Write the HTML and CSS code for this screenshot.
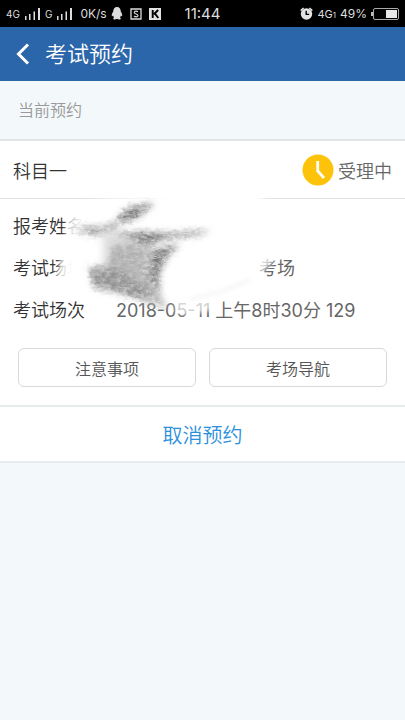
FILE: index.html
```html
<!DOCTYPE html>
<html lang="zh-CN">
<head>
<meta charset="utf-8">
<meta name="viewport" content="width=device-width, initial-scale=1">
<title>考试预约</title>
<link rel="stylesheet" href="styles.css">
</head>
<body>
<div class="status">
  <div class="status-left">
    <span class="net">4G</span>
    <svg width="17" height="12" viewBox="0 0 17 12" fill="#ddd"><path d="M1 8h1.500v4H1zM5 6h1.500v6H5zM9.500 3.500H11V12H9.500zM14 0h2v12h-2z"/></svg>
    <span class="net">G</span>
    <svg width="17" height="12" viewBox="0 0 17 12" fill="#ddd"><path d="M1 8h1.500v4H1zM5 6h1.500v6H5zM9.500 3.500H11V12H9.500zM14 0h2v12h-2z"/></svg>
    <span class="speed">0K/s</span>
    <svg width="12" height="13" viewBox="0 0 12 13" fill="#ddd"><path d="M6 0C3.500 0 2.300 1.800 2.300 4.300 1.300 6 .6 7.500.8 9c.3.500 1-.2 1.200-.5.200.8.600 1.400 1 1.900-1 .6-1.200 1.900.3 2 1.200.1 2-.2 2.700-.6.700.4 1.500.7 2.700.6 1.500-.1 1.300-1.400.3-2 .4-.5.800-1.100 1-1.900.2.300.9 1 1.200.5.200-1.500-.5-3-1.500-4.700C9.700 1.800 8.500 0 6 0z"/></svg>
    <svg class="app" width="12" height="12" viewBox="0 0 12 12" fill="none" stroke="#ddd"><path d="M1 1h10v10H1z" stroke-width="1.300"/><path d="M8 3.800C6.500 2.600 4.200 3 4.200 4.500S8 6.100 8 7.600 5.300 9.200 4 8" stroke-width="1.200"/></svg>
    <svg width="12" height="12" viewBox="0 0 12 12"><path fill="#e4e4e4" d="M0 0h12v12H0z"/><path fill="none" stroke="#000" stroke-width="1.900" d="M3.700 2v8M9.200 2 4.800 6.300M5.800 5.400 9.300 10"/></svg>
  </div>
  <time class="clock">11:44</time>
  <div class="status-right">
    <svg width="13" height="13" viewBox="0 0 13 13"><circle cx="6.500" cy="7" r="5.700" fill="#e4e4e4"/><path d="M.7 3.600 3.600 1M9.400 1l2.900 2.600" stroke="#e4e4e4" stroke-width="1.500"/><path d="M6.200 3.700v3.700h3" fill="none" stroke="#000" stroke-width="1.400"/></svg>
    <span class="data">4G<small>1</small></span>
    <span class="percent">49%</span>
    <svg width="28" height="12" viewBox="0 0 28 12"><rect x="2.500" y=".5" width="25" height="11" rx="1.500" fill="none" stroke="#aaa"/><path d="M0 4h2v4H0z" fill="#bbb"/><path d="M15 2h11v8H15z" fill="#e8e8e8"/></svg>
  </div>
</div>
<header class="bar">
  <button class="back" aria-label="返回"><svg width="14" height="22" viewBox="0 0 14 22" fill="none" stroke="#fff" stroke-width="3"><path d="M12 1.500 2.500 11 12 20.500"/></svg></button>
  <h1>考试预约</h1>
</header>
<main>
  <h2 class="section">当前预约</h2>
  <section class="card">
    <div class="subject">
      <h3>科目一</h3>
      <span class="state"><svg width="32" height="32" viewBox="0 0 32 32"><circle cx="16" cy="16" r="15.500" fill="#fdc30a"/><path d="M15.700 7v10l6.300 7" fill="none" stroke="#fff" stroke-width="2.800"/></svg>受理中</span>
    </div>
    <div class="details">
      <dl>
        <dt>报考姓名</dt><dd></dd>
        <dt>考试场地</dt><dd class="place">考场</dd>
        <dt>考试场次</dt><dd>2018-05-11 上午8时30分 129</dd>
      </dl>
      <svg class="smudge" viewBox="0 0 405 140" width="405" height="140" aria-hidden="true">
        <defs>
          <filter id="soft" x="-30%" y="-30%" width="160%" height="160%"><feGaussianBlur stdDeviation="4"/></filter>
          <filter id="edge" x="-30%" y="-30%" width="160%" height="160%"><feGaussianBlur stdDeviation="2"/></filter>
          <filter id="grain" x="-20%" y="-30%" width="140%" height="160%">
            <feGaussianBlur in="SourceGraphic" stdDeviation="3" result="b"/>
            <feTurbulence type="fractalNoise" baseFrequency=".18 .35" numOctaves="2" seed="3" result="n"/>
            <feColorMatrix in="n" type="matrix" values="0 0 0 0 0  0 0 0 0 0  0 0 0 0 0  1.300 0 0 0 .15" result="a"/>
            <feComposite in="b" in2="a" operator="in" result="c"/>
            <feDisplacementMap in="c" in2="n" scale="5" xChannelSelector="R" yChannelSelector="G" result="d"/>
            <feGaussianBlur in="d" stdDeviation=".7"/>
          </filter>
        </defs>
        <path fill="#fff" filter="url(#soft)" d="M180-5H262V60L258 70 240 86 205 101 160 104 90 98 66 92 64 60 72 38 80 14 110 4z"/>
        <path fill="#fff" opacity=".7" filter="url(#edge)" d="M67 14h41v82H60l-4-15 8-30zM255 56l20 5-4 7-12 12zM175 100l40-3-3 17-22 6-15-3z"/>
        <g filter="url(#grain)">
          <path fill="#888" opacity=".8" d="M74 34 88 30 102 31 118 24 128 19 116 33 94 40z"/>
          <path fill="#777" d="M119 19 132 10 155 7 145 16 134 24 122 26z"/>
          <path fill="#777" d="M114 37 145 36 175 37 210 34 199 39 164 43 150 50 138 45z"/>
          <path fill="#aaa" opacity=".8" d="M112 50 137 47 161 54 152 70 158 94 168 114 145 106 121 97 95 92 90 73 108 70z"/>
          <path fill="#777" opacity=".65" d="M88 70 119 73 130 82 145 91 152 101 137 102 112 94 94 92z"/>
          <path fill="#666" opacity=".85" d="M152 56 163 51 180 49 167 61 159 80 160 96 151 86 149 69z"/>
        </g>
        <path fill="#999" opacity=".35" filter="url(#soft)" d="M103 35 140 42 145 80 163 104 132 98 95 90 104 65z"/>
        <path fill="none" stroke="#ccc" opacity=".3" stroke-width="2" filter="url(#edge)" d="M190 103 220 96 250 84"/>
      </svg>
    </div>
    <div class="actions">
      <button>注意事项</button>
      <button>考场导航</button>
    </div>
    <button class="cancel">取消预约</button>
  </section>
</main>
</body>
</html>
```
FILE: styles.css
```css
* { box-sizing: border-box; }
body {
  margin: 0;
  min-height: 100vh;
  background: #f3f8fa;
  color: #333;
  font-family: Inter, "Noto Sans CJK SC", sans-serif;
  font-weight: 350;
}
svg { display: block; flex: none; }
h1, h2, h3, dl, dd { margin: 0; font-weight: 350; }
button { font: inherit; cursor: pointer; }

.status {
  display: grid;
  grid-template-columns: 1fr auto 1fr;
  align-items: center;
  height: 27px;
  padding: 0 6px;
  background: #000;
  color: #ddd;
  font-size: 12px;
  font-weight: 400;
}
.status-left, .status-right { display: flex; align-items: center; gap: 4px; }
.status-right { justify-content: flex-end; }
.net { font-size: 10px; }
.speed { margin-left: 3px; }
.app { margin: 0 3px; }
.clock { font-size: 15px; }
.data { font-size: 11px; }
.data small { font-size: 8px; }

.bar {
  display: flex;
  align-items: center;
  gap: 15px;
  height: 54px;
  padding: 0 16px;
  background: #2c66aa;
  color: #fff;
}
.back { padding: 0; border: 0; background: none; }
.bar h1 { font-size: 22px; line-height: 32px; }

.section {
  padding: 18px;
  border-bottom: 2px solid #e1e5e7;
  color: #999;
  font-size: 16px;
  line-height: 22px;
}
.card { background: #fff; border-bottom: 2px solid #e6ecec; }
.subject {
  display: flex;
  align-items: center;
  justify-content: space-between;
  height: 58px;
  padding: 0 13px;
  border-bottom: 1px solid #dfe5e5;
}
.subject h3 { font-size: 18px; }
.state { display: flex; align-items: center; gap: 4px; color: #666; font-size: 18px; }

.details { position: relative; padding: 5px 13px 9px; }
.details dl {
  display: grid;
  grid-template-columns: 103px 1fr;
  grid-auto-rows: 42px;
  align-items: center;
  font-size: 18px;
}
.details dd { color: #666; font-weight: 400; }
.details .place { padding-left: 143px; }
.smudge { position: absolute; top: -3px; left: 0; }

.actions { display: grid; grid-template-columns: 1fr 1fr; gap: 13px; padding: 9px 18px 18px; }
.actions button {
  height: 39px;
  padding: 0;
  border: 1px solid #d9d9d9;
  border-radius: 6px;
  background: #fff;
  color: #555;
  font-size: 16px;
}
.cancel {
  display: block;
  width: 100%;
  height: 56px;
  padding: 0;
  border: 0;
  border-top: 2px solid #e6ecec;
  background: #fff;
  color: #2b90dc;
  font-size: 20px;
}
```
